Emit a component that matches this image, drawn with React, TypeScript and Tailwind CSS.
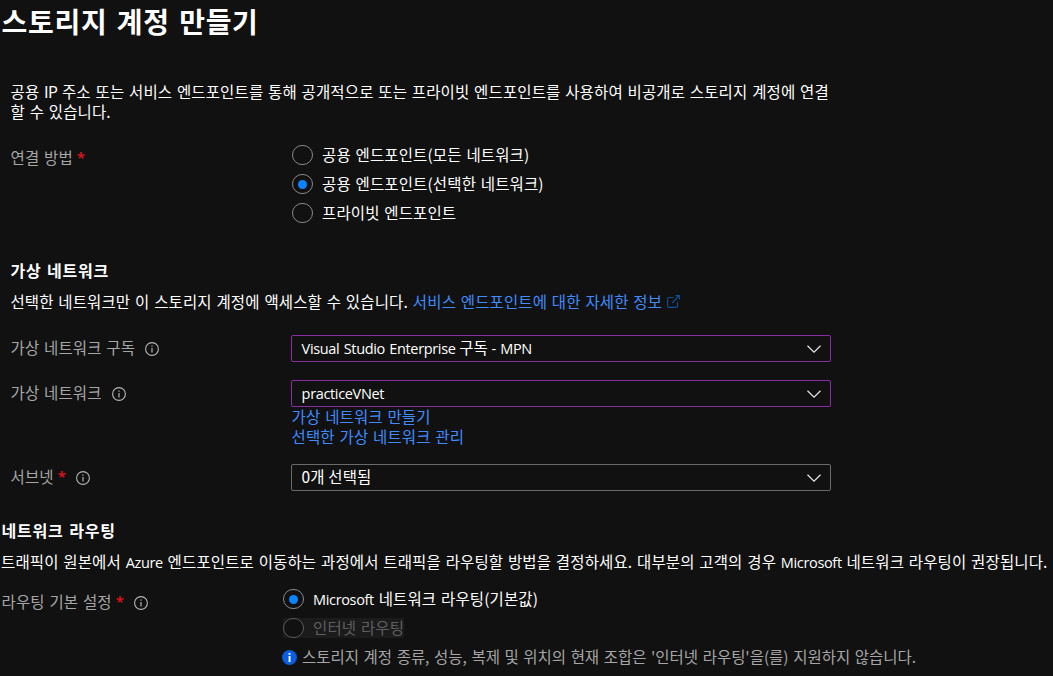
import type { ReactNode } from "react";

function L({ children }: { children: ReactNode }) {
  return <span className="font-['Open_Sans'] text-[14.5px] leading-none tracking-[-0.34px] [word-spacing:0.9px]">{children}</span>;
}

function Info({ className = "" }: { className?: string }) {
  return (
    <svg viewBox="0 0 14 14" className={"h-3.5 w-3.5 shrink-0 text-[#b5b5b5] " + className} fill="none" stroke="currentColor">
      <circle cx="7" cy="7" r="6.4" strokeWidth="1.1" />
      <path d="M7 3.6v1.2M7 6v4.5" strokeWidth="1.2" />
    </svg>
  );
}

function External() {
  return (
    <svg viewBox="0 0 13 13" className="ml-[5px] h-[13px] w-[13px] shrink-0" fill="none" stroke="#0f4f98" strokeWidth="1.1">
      <path d="M6.5 2.5H2Q0.6 2.5 0.6 4v7Q0.6 12.4 2 12.4h7Q10.5 12.4 10.5 11V7M5 8l7-7M8.3 0.6h4.1v4.1" />
    </svg>
  );
}

function Notice() {
  return (
    <svg viewBox="0 0 15 15" className="-ml-px mr-[5px] h-[15px] w-[15px] shrink-0">
      <circle cx="7.5" cy="7.5" r="7.4" fill="#0a5fe0" />
      <path d="M6.6 2.9h1.9v1.9H6.6zM6.6 6h1.9v6H6.6z" fill="#fff" />
    </svg>
  );
}

function Radio({ checked = false, disabled = false, children }: { checked?: boolean; disabled?: boolean; children: ReactNode }) {
  return (
    <label className={"flex h-5 w-max items-center " + (disabled ? "bg-[#1b1b1b] text-[#5f5f5f]" : "text-white")}>
      <span className={"flex h-5 w-[21px] shrink-0 items-center justify-center rounded-full border bg-[#111111] " + (disabled ? "border-[#5c5c5c]" : "border-[#8a8a8a]")}>
        {checked && <span className="h-[9px] w-[9px] rounded-full bg-[#0a84ff]" />}
      </span>
      <span className="-mt-0.5 ml-[9px]">{children}</span>
    </label>
  );
}

function Select({ accent = false, children }: { accent?: boolean; children: ReactNode }) {
  return (
    <button type="button" className={"flex h-[27px] w-[540px] items-center justify-between rounded-[2px] border pr-[9px] pl-[9.6px] text-white " + (accent ? "border-[#8a2da5]" : "border-[#6a6a6a]")}>
      <span className="-mt-1">{children}</span>
      <svg viewBox="0 0 14 8" className="h-2 w-3.5" fill="none" stroke="#e8e8e8" strokeWidth="1.2">
        <path d="M0.5 0.7 7 7.1 13.5 0.7" />
      </svg>
    </button>
  );
}

function Label({ required = false, info = true, className = "", children }: { required?: boolean; info?: boolean; className?: string; children: ReactNode }) {
  return (
    <div className={"flex items-center pl-[0.5px] text-[#a6a6a6] " + className}>
      <span className="-mt-1">{children}</span>
      {required && <span className="-mt-[4px] ml-[4px] h-5 w-[8px] font-['Open_Sans'] text-[15px] leading-5 font-semibold tracking-normal text-[#e3141f]">*</span>}
      {info && <Info className="ml-[10px]" />}
    </div>
  );
}

export default function App() {
  return (
    <main className="h-[676px] w-[1053px] overflow-hidden bg-[#111111] font-['Noto_Sans_CJK_KR',sans-serif] text-[15.5px] leading-5 tracking-[0.13px] whitespace-nowrap text-white [word-spacing:1.15px]">
      <h1 className="h-[43px] pl-[1.5px] text-[28px] leading-[42px] font-bold tracking-[0.7px] [word-spacing:2.4px]">스토리지 계정 만들기</h1>
      <section className="pt-[38px] pl-[10px]">
        <p className="pl-[0.5px]">
          공용 <span className="tracking-[-0.6px]">IP</span> 주소 또는 서비스 엔드포인트를 통해 공개적으로 또는 프라이빗 엔드포인트를 사용하여 비공개로 스토리지 계정에 연결
          <br />할 수 있습니다.
        </p>
        <div className="mt-6 flex">
          <Label required info={false} className="h-[28px] w-[282px]">연결 방법</Label>
          <div className="flex flex-col gap-[9px]">
            <Radio>공용 엔드포인트(모든 네트워크)</Radio>
            <Radio checked>공용 엔드포인트(선택한 네트워크)</Radio>
            <Radio>프라이빗 엔드포인트</Radio>
          </div>
        </div>
        <h2 className="mt-[37px] pl-[0.5px] text-[16px] leading-5 font-bold tracking-[0.75px] [word-spacing:1.2px]">가상 네트워크</h2>
        <p className="mt-[11px] flex items-center pl-[0.4px]">
          <span>선택한 네트워크만 이 스토리지 계정에 액세스할 수 있습니다.</span>
          <a className="ml-[5px] text-[#3f8cff]">서비스 엔드포인트에 대한 자세한 정보</a>
          <External />
        </p>
        <div className="mt-6 flex items-center">
          <Label className="w-[281px]">가상 네트워크 구독</Label>
          <Select accent>
            <L>Visual Studio Enterprise</L> 구독 <L>- MPN</L>
          </Select>
        </div>
        <div className="mt-[18px] flex items-center">
          <Label className="w-[281px]">가상 네트워크</Label>
          <Select accent>
            <L>practiceVNet</L>
          </Select>
        </div>
        <div className="-mt-px ml-[281.6px] flex flex-col text-[#3f8cff]">
          <a>가상 네트워크 만들기</a>
          <a>선택한 가상 네트워크 관리</a>
        </div>
        <div className="mt-[18px] flex items-center">
          <Label required className="w-[281px]">서브넷</Label>
          <Select>0개 선택됨</Select>
        </div>
      </section>
      <section className="pt-[29px] pl-px">
        <h2 className="pl-[0.5px] text-[16px] leading-5 font-bold tracking-[0.75px] [word-spacing:1.6px]">네트워크 라우팅</h2>
        <p className="mt-[11px]">
          트래픽이 원본에서 <L>Azure</L> 엔드포인트로 이동하는 과정에서 트래픽을 라우팅할 방법을 결정하세요. 대부분의 고객의 경우 <L>Microsoft</L> 네트워크 라우팅이 권장됩니다.
        </p>
        <div className="mt-[18px] flex">
          <Label required className="h-[27px] w-[282px]">라우팅 기본 설정</Label>
          <div className="flex flex-col gap-[9px]">
            <Radio checked>
              <L>Microsoft</L> 네트워크 라우팅(기본값)
            </Radio>
            <Radio disabled>인터넷 라우팅</Radio>
            <p className="mt-px flex items-center text-[#a6a6a6]">
              <Notice />
              <span className="-mt-0.5 tracking-[-0.02px]">스토리지 계정 종류, 성능, 복제 및 위치의 현재 조합은 '인터넷 라우팅'을(를) 지원하지 않습니다.</span>
            </p>
          </div>
        </div>
      </section>
    </main>
  );
}
